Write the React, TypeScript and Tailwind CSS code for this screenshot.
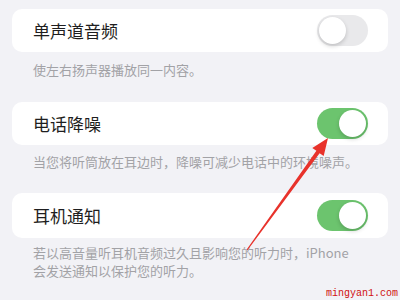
import React from "react";

function Toggle({ on }: { on: boolean }) {
  return (
    <div
      className={
        on
          ? "w-[51px] h-[31px] rounded-full bg-[#6cc46e] flex items-center justify-end p-[2px]"
          : "w-[51px] h-[31px] rounded-full bg-[#e9e9eb] flex items-center justify-start p-[2px]"
      }
    >
      <div className="w-[27px] h-[27px] rounded-full bg-white shadow-[0_2px_4px_rgba(0,0,0,0.18)]" />
    </div>
  );
}

function Row({ title, on, h }: { title: string; on: boolean; h: string }) {
  return (
    <div className={`${h} rounded-[10px] bg-white flex items-center justify-between pl-[21px] pr-[20px]`}>
      <span className="text-[17px] leading-none text-[#1e1e20]">{title}</span>
      <Toggle on={on} />
    </div>
  );
}

export default function App() {
  return (
    <div
      className="relative w-[400px] h-[300px] overflow-hidden bg-[#f2f2f6] px-3 pt-[9px]"
      style={{ fontFamily: '"Noto Sans CJK SC", "Noto Sans", sans-serif' }}
    >
      <Row title="单声道音频" on={false} h="h-[43px]" />
      <p className="mt-[9px] pl-[21px] text-[13px] leading-[18px] text-[#a2a2a6]">使左右扬声器播放同一内容。</p>

      <div className="mt-[23px]">
        <Row title="电话降噪" on={true} h="h-[43px]" />
      </div>
      <p className="mt-[8px] pl-[21px] text-[13px] leading-[18px] text-[#a2a2a6]">
        当您将听筒放在耳边时，降噪可减少电话中的环境噪声。
      </p>

      <div className="mt-[22px]">
        <Row title="耳机通知" on={true} h="h-[45px]" />
      </div>
      <p className="mt-[6px] pl-[21px] text-[13px] leading-[18px] text-[#a2a2a6]">
        若以高音量听耳机音频过久且影响您的听力时，iPhone
        <br />
        会发送通知以保护您的听力。
      </p>

      <svg className="absolute left-0 top-0 pointer-events-none" width="400" height="300" viewBox="0 0 400 300">
        <polygon
          points="328,138 323.7,156 319.6,153.2 247.5,250.3 246.5,249.7 316.4,150.8 312.3,147.9"
          fill="#e8322b"
        />
      </svg>

      <div
        className="absolute right-[2px] bottom-[1px] text-[10px] leading-none text-[#d01010]"
        style={{ fontFamily: '"Liberation Mono", "DejaVu Sans Mono", monospace' }}
      >
        mingyan1.com
      </div>
    </div>
  );
}
